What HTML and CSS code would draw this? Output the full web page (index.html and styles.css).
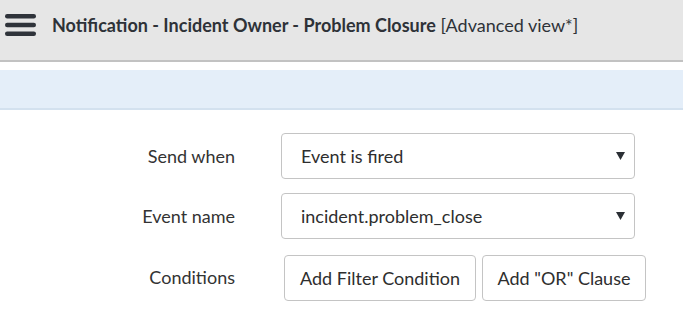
FILE: index.html
```html
<!DOCTYPE html>
<html>
<head>
<meta charset="utf-8">
<link rel="stylesheet" href="styles.css">
</head>
<body>
<header class="topbar">
  <svg class="menu-icon" width="32" height="24" viewBox="0 0 32 24">
    <rect x="0" y="0" width="31" height="4.5" rx="2.2" fill="#2f333a"/>
    <rect x="0" y="8.7" width="31" height="4.5" rx="2.2" fill="#2f333a"/>
    <rect x="0" y="17.4" width="31" height="4.5" rx="2.2" fill="#2f333a"/>
  </svg>
  <h1 class="title"><span class="title-main">Notification - Incident Owner - Problem Closure</span> <span class="title-view">[Advanced view*]</span></h1>
</header>
<div class="spacer"></div>
<div class="infobar"></div>
<form class="form">
  <label class="label">Send when</label>
  <div class="select"><span>Event is fired</span><svg class="arrow" width="9" height="9" viewBox="0 0 9 9"><polygon points="0,1 9,1 4.5,9" fill="#2b2f35"/></svg></div>
  <label class="label">Event name</label>
  <div class="select"><span>incident.problem_close</span><svg class="arrow" width="9" height="9" viewBox="0 0 9 9"><polygon points="0,1 9,1 4.5,9" fill="#2b2f35"/></svg></div>
  <label class="label">Conditions</label>
  <div class="buttons">
    <button type="button" class="btn btn-filter">Add Filter Condition</button>
    <button type="button" class="btn btn-or">Add "OR" Clause</button>
  </div>
</form>
</body>
</html>
```
FILE: styles.css
```css
* { box-sizing: border-box; }
html, body { margin: 0; padding: 0; background: #fff; }
body {
  font-family: "Lato", "Open Sans", sans-serif;
  color: #2e3238;
  width: 683px;
  height: 313px;
  overflow: hidden;
}
.topbar {
  height: 62px;
  background: #e6e6e6;
  border-bottom: 2px solid #c2c2c2;
  display: flex;
  align-items: center;
  padding: 0 0 10px 5px;
}
.menu-icon { display: block; margin-top: 1px; }
.title {
  margin: 0 0 0 15px;
  font-size: 18px;
  font-weight: normal;
  color: #2e3238;
  white-space: nowrap;
}
.title-main { font-weight: bold; }
.spacer { height: 8px; background: #fff; }
.infobar {
  height: 40px;
  background: #e4eef9;
  border-bottom: 2px solid #d3e1ef;
}
.form {
  display: grid;
  grid-template-columns: 235px 354px;
  column-gap: 46px;
  row-gap: 14px;
  margin-top: 23px;
  font-size: 18px;
}
.label {
  text-align: right;
  align-self: center;
  color: #333;
}
.select {
  height: 46px;
  border: 1px solid #c4c4c4;
  border-radius: 4px;
  display: flex;
  align-items: center;
  justify-content: space-between;
  padding: 0 9px 0 19px;
  color: #2e2e2e;
  background: #fff;
}
.arrow { display: block; margin-top: -2px; }
.buttons {
  display: flex;
  gap: 6px;
  margin-left: 3px;
  margin-top: 2px;
}
.btn {
  flex-shrink: 0;
  height: 46px;
  border: 1px solid #c4c4c4;
  border-radius: 4px;
  background: #fff;
  font-family: inherit;
  font-size: 18px;
  color: #2e2e2e;
  padding: 0 6px;
  white-space: nowrap;
}
.btn-filter { width: 192px; }
.btn-or { width: 164px; }
```
